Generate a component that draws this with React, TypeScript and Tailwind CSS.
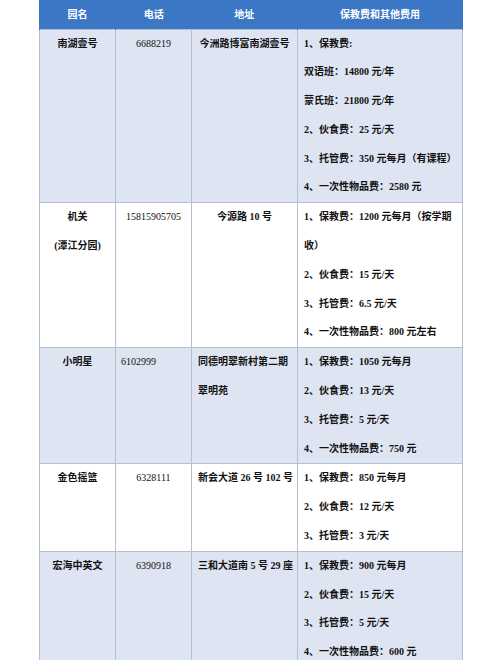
type Align = 'left' | 'center'

type Row = {
  name: string[]
  phone: string
  phoneAlign: Align
  addr: string[]
  addrAlign: Align
  fees: string[]
  shaded: boolean
}

const rows: Row[] = [
  {
    name: ['南湖壹号'],
    phone: '6688219',
    phoneAlign: 'center',
    addr: ['今洲路博富南湖壹号'],
    addrAlign: 'center',
    fees: [
      '1、保教费:',
      '双语班：14800 元/年',
      '蒙氏班：21800 元/年',
      '2、伙食费：25 元/天',
      '3、托管费：350 元每月（有课程）',
      '4、一次性物品费：2580 元',
    ],
    shaded: true,
  },
  {
    name: ['机关', '(潭江分园)'],
    phone: '15815905705',
    phoneAlign: 'center',
    addr: ['今源路 10 号'],
    addrAlign: 'center',
    fees: [
      '1、保教费：1200 元每月（按学期',
      '收）',
      '2、伙食费：15 元/天',
      '3、托管费：6.5 元/天',
      '4、一次性物品费：800 元左右',
    ],
    shaded: false,
  },
  {
    name: ['小明星'],
    phone: '6102999',
    phoneAlign: 'left',
    addr: ['同德明翠新村第二期', '翠明苑'],
    addrAlign: 'left',
    fees: ['1、保教费：1050 元每月', '2、伙食费：13 元/天', '3、托管费：5 元/天', '4、一次性物品费：750 元'],
    shaded: true,
  },
  {
    name: ['金色摇篮'],
    phone: '6328111',
    phoneAlign: 'center',
    addr: ['新会大道 26 号 102 号'],
    addrAlign: 'left',
    fees: ['1、保教费：850 元每月', '2、伙食费：12 元/天', '3、托管费：3 元/天'],
    shaded: false,
  },
  {
    name: ['宏海中英文'],
    phone: '6390918',
    phoneAlign: 'center',
    addr: ['三和大道南 5 号 29 座'],
    addrAlign: 'left',
    fees: ['1、保教费：900 元每月', '2、伙食费：15 元/天', '3、托管费：5 元/天', '4、一次性物品费：600 元'],
    shaded: true,
  },
]

function Lines({ lines }: { lines: string[] }) {
  return (
    <>
      {lines.map((l, i) => (
        <div key={i} className="whitespace-nowrap">
          {l}
        </div>
      ))}
    </>
  )
}

export default function App() {
  const cell = 'border border-[#b3bfd3] align-top p-0 leading-[28.8px]'
  return (
    <div
      className="min-h-screen bg-white px-[39px] text-[10px] text-[#111]"
      style={{ fontFamily: '"Liberation Serif", "Noto Sans CJK SC", serif' }}
    >
      <table className="w-[423px] table-fixed border-collapse">
        <colgroup>
          <col className="w-[76px]" />
          <col className="w-[76px]" />
          <col className="w-[106px]" />
          <col className="w-[165px]" />
        </colgroup>
        <thead>
          <tr className="bg-[#3c77c5] text-white font-bold h-[29px]">
            <th className="border-x border-[#3c77c5] text-center font-bold">园名</th>
            <th className="text-center font-bold">电话</th>
            <th className="text-center font-bold">地址</th>
            <th className="border-x border-[#3c77c5] text-center font-bold">保教费和其他费用</th>
          </tr>
        </thead>
        <tbody className="font-semibold">
          {rows.map((r, i) => (
            <tr key={i} className={r.shaded ? 'bg-[#dee4f2]' : 'bg-white'}>
              <td className={`${cell} text-center`}>
                <Lines lines={r.name} />
              </td>
              <td className={`${cell} font-normal ${r.phoneAlign === 'center' ? 'text-center' : 'text-left pl-[5px]'}`}>
                {r.phone}
              </td>
              <td className={`${cell} ${r.addrAlign === 'center' ? 'text-center' : 'text-left pl-[6px]'}`}>
                <Lines lines={r.addr} />
              </td>
              <td className={`${cell} pl-[6px]`}>
                <Lines lines={r.fees} />
              </td>
            </tr>
          ))}
        </tbody>
      </table>
    </div>
  )
}
